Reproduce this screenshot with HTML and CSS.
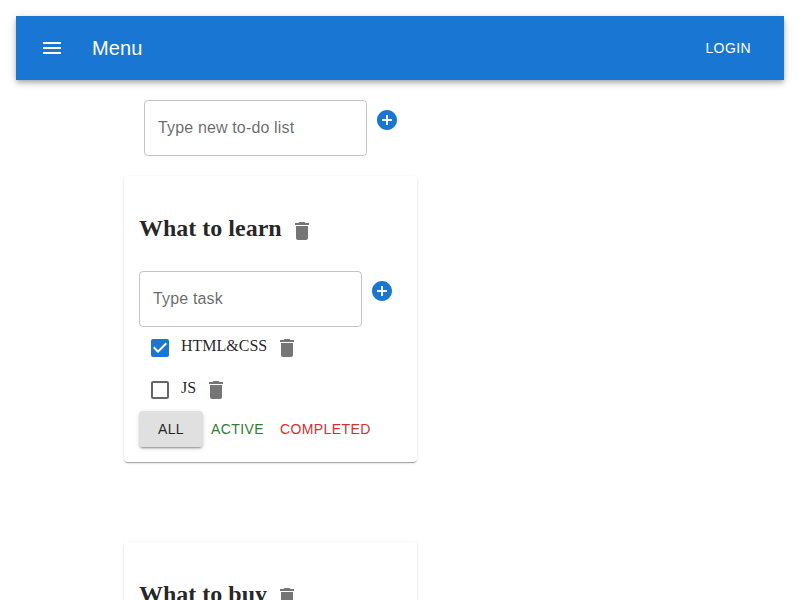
FILE: index.html
```html
<!DOCTYPE html>
<html lang="en">
<head>
<meta charset="utf-8">
<title>Todolist</title>
<link rel="stylesheet" href="styles.css">
</head>
<body>
<svg class="defs" width="0" height="0">
  <symbol id="add" viewBox="0 0 24 24"><path d="M12 2C6.48 2 2 6.48 2 12s4.48 10 10 10 10-4.48 10-10S17.52 2 12 2zm5 11h-4v4h-2v-4H7v-2h4V7h2v4h4v2z"/></symbol>
  <symbol id="trash" viewBox="0 0 24 24"><path d="M6 19c0 1.100.9 2 2 2h8c1.100 0 2-.9 2-2V7H6v12zM19 4h-3.500l-1-1h-5l-1 1H5v2h14V4z"/></symbol>
</svg>
<header class="appbar">
  <button class="icon-button"><svg class="icon" viewBox="0 0 24 24"><path d="M3 18h18v-2H3v2zm0-5h18v-2H3v2zm0-7v2h18V6H3z"/></svg></button>
  <div class="brand">Menu</div>
  <button class="login">Login</button>
</header>
<main class="container">
  <form class="add-form add-list">
    <input class="field" type="text" placeholder="Type new to-do list">
    <button type="button" class="icon-button primary"><svg class="icon"><use href="#add"/></svg></button>
  </form>
  <section class="card">
    <h2 class="title">What to learn<button class="icon-button muted"><svg class="icon"><use href="#trash"/></svg></button></h2>
    <form class="add-form">
      <input class="field" type="text" placeholder="Type task">
      <button type="button" class="icon-button primary"><svg class="icon"><use href="#add"/></svg></button>
    </form>
    <div class="task"><span class="check primary"><svg class="icon" viewBox="0 0 24 24"><path d="M19 3H5c-1.110 0-2 .9-2 2v14c0 1.100.89 2 2 2h14c1.110 0 2-.9 2-2V5c0-1.100-.89-2-2-2zm-9 14l-5-5 1.410-1.410L10 14.170l7.590-7.590L19 8l-9 9z"/></svg></span><span class="task-name">HTML&amp;CSS</span><button class="icon-button muted"><svg class="icon"><use href="#trash"/></svg></button></div>
    <div class="task"><span class="check"><svg class="icon" viewBox="0 0 24 24"><path d="M19 5v14H5V5h14m0-2H5c-1.100 0-2 .9-2 2v14c0 1.100.9 2 2 2h14c1.100 0 2-.9 2-2V5c0-1.100-.9-2-2-2z"/></svg></span><span class="task-name">JS</span><button class="icon-button muted"><svg class="icon"><use href="#trash"/></svg></button></div>
    <div class="filters"><button class="filter selected">All</button><button class="filter active">Active</button><button class="filter completed">Completed</button></div>
  </section>
  <section class="card">
    <h2 class="title">What to buy<button class="icon-button muted"><svg class="icon"><use href="#trash"/></svg></button></h2>
  </section>
</main>
</body>
</html>
```
FILE: styles.css
```css
* { box-sizing: border-box; }
html { overflow: hidden; }
body {
  margin: 0;
  padding: 16px;
  height: 600px;
  overflow: hidden;
  background: #fff;
  color: rgba(0, 0, 0, .87);
  font-family: "Liberation Serif", serif;
  font-size: 16px;
}
button {
  margin: 0;
  border: 0;
  background: transparent;
  color: inherit;
  font: 14px/24.5px "Liberation Sans", sans-serif;
  letter-spacing: .4px;
  text-transform: uppercase;
}
.defs { position: absolute; }
.icon { display: block; width: 24px; height: 24px; fill: currentColor; }
.icon-button { flex: none; padding: 8px; width: 40px; height: 40px; }
.primary { color: #1976d2; }
.muted { color: rgba(0, 0, 0, .54); }
.appbar {
  display: flex;
  align-items: center;
  height: 64px;
  padding: 0 24px;
  background: #1976d2;
  color: #fff;
  box-shadow: 0 2px 4px -1px rgba(0,0,0,.2), 0 4px 5px rgba(0,0,0,.14), 0 1px 10px rgba(0,0,0,.12);
}
.appbar .icon-button { padding: 12px; width: 48px; height: 48px; margin-left: -12px; }
.brand { flex: 1; margin-left: 16px; font: 20px/32px "Liberation Sans", sans-serif; letter-spacing: .15px; }
.login { padding: 6px 9px 6px 8px; }
.container { width: 293px; margin: 20px 0 0 108px; }
.add-form { display: flex; align-items: flex-start; }
.add-list { padding-left: 20px; margin-bottom: 20px; }
.field {
  flex: none;
  width: 223px;
  height: 56px;
  padding: 0 13px;
  border: 1px solid rgba(0,0,0,.23);
  border-radius: 4px;
  background: transparent;
  font: 16px "Liberation Sans", sans-serif;
  letter-spacing: .15px;
}
.field::placeholder { color: rgba(0,0,0,.6); opacity: 1; }
.card {
  height: 286px;
  margin-bottom: 80px;
  padding: 15px;
  border-radius: 4px;
  box-shadow: 0 2px 1px -1px rgba(0,0,0,.2), 0 1px 1px rgba(0,0,0,.14), 0 1px 3px rgba(0,0,0,.12);
}
.title { display: flex; margin: 20px 0; height: 40px; font-size: 24px; line-height: 35px; }
.task { display: flex; height: 42px; }
.task .icon-button { margin-top: 1px; }
.check { flex: none; width: 42px; padding: 9px; color: rgba(0,0,0,.6); }
.check.primary { color: #1976d2; }
.task-name { line-height: 38px; }
.filters { display: flex; }
.filter { height: 36px; padding: 6px 8px; border-radius: 4px; }
.selected { width: 64px; background: #e0e0e0; box-shadow: 0 3px 1px -2px rgba(0,0,0,.2), 0 2px 2px rgba(0,0,0,.14), 0 1px 5px rgba(0,0,0,.12); }
.active { color: #2e7d32; }
.completed { color: #d32f2f; }
```
